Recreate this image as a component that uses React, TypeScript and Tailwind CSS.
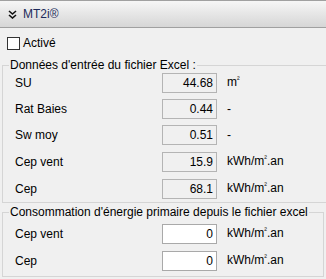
import React from "react";

const font = { fontFamily: '"Segoe UI", "Liberation Sans", Arial, sans-serif' };

function Row({
  label,
  value,
  unit,
  white,
  className,
}: {
  label: string;
  value: string;
  unit: React.ReactNode;
  white?: boolean;
  className?: string;
}) {
  return (
    <div className={"flex items-center h-[20px] " + (className ?? "")}>
      <div className="w-[159px] pl-[12px] text-[12px] leading-[16px] text-black">{label}</div>
      <div
        className={
          "w-[55px] h-[20px] border text-right pr-[3px] text-[12px] leading-[18px] text-black " +
          (white ? "bg-white border-[#a9a9a9]" : "bg-[#f0f0f0] border-[#b4b4b4]")
        }
      >
        {value}
      </div>
      <div className="ml-[10px] text-[12px] leading-[16px] text-black">{unit}</div>
    </div>
  );
}

const KWh = (
  <span>
    kWh/m<span className="text-[8px] relative -top-[4px]">²</span>.an
  </span>
);

export default function App() {
  return (
    <div className="w-[326px] h-[279px] bg-[#f0f0f0] overflow-hidden" style={font}>
      <div className="h-[28px] border-t border-b border-[#a0a0a0] bg-gradient-to-b from-[#f6f6f6] to-[#d6d6d6] flex items-center">
        <svg width="9" height="9" viewBox="0 0 9 9" className="ml-[8px]">
          <polyline points="1,1 4.5,4 8,1" fill="none" stroke="#111" strokeWidth="1.6" />
          <polyline points="1,5 4.5,8 8,5" fill="none" stroke="#111" strokeWidth="1.6" />
        </svg>
        <span className="ml-[6px] text-[12px] leading-[16px] text-[#1c2a5a]">MT2i®</span>
      </div>

      <div className="flex items-center h-[14px] mt-[8px] pl-[7px]">
        <div className="w-[13px] h-[13px] border border-[#333] bg-white" />
        <span className="ml-[3px] text-[12px] leading-[16px] text-black">Activé</span>
      </div>

      <fieldset className="mt-[7px] ml-[2px] border-l border-t border-b border-[#d5d5d5] p-0 min-w-0">
        <legend className="ml-[6px] px-[1px] text-[12px] leading-[16px] text-black">
          Données d'entrée du fichier Excel :
        </legend>
        <div className="pb-[3px]">
          <Row label="SU" value="44.68" unit={<span>m<span className="text-[8px] relative -top-[4px]">²</span></span>} />
          <Row className="mt-[6px]" label="Rat Baies" value="0.44" unit="-" />
          <Row className="mt-[6px]" label="Sw moy" value="0.51" unit="-" />
          <Row className="mt-[7px]" label="Cep vent" value="15.9" unit={KWh} />
          <Row className="mt-[7px]" label="Cep" value="68.1" unit={KWh} />
        </div>
      </fieldset>

      <fieldset className="mt-[1px] ml-[2px] w-[322px] border border-[#d5d5d5] p-0 min-w-0">
        <legend className="ml-[6px] px-[1px] text-[12px] leading-[16px] text-black">
          Consommation d'énergie primaire depuis le fichier excel
        </legend>
        <div className="pt-[4px] pb-[5px]">
          <Row label="Cep vent" value="0" unit={KWh} white />
          <Row className="mt-[7px]" label="Cep" value="0" unit={KWh} white />
        </div>
      </fieldset>
    </div>
  );
}
